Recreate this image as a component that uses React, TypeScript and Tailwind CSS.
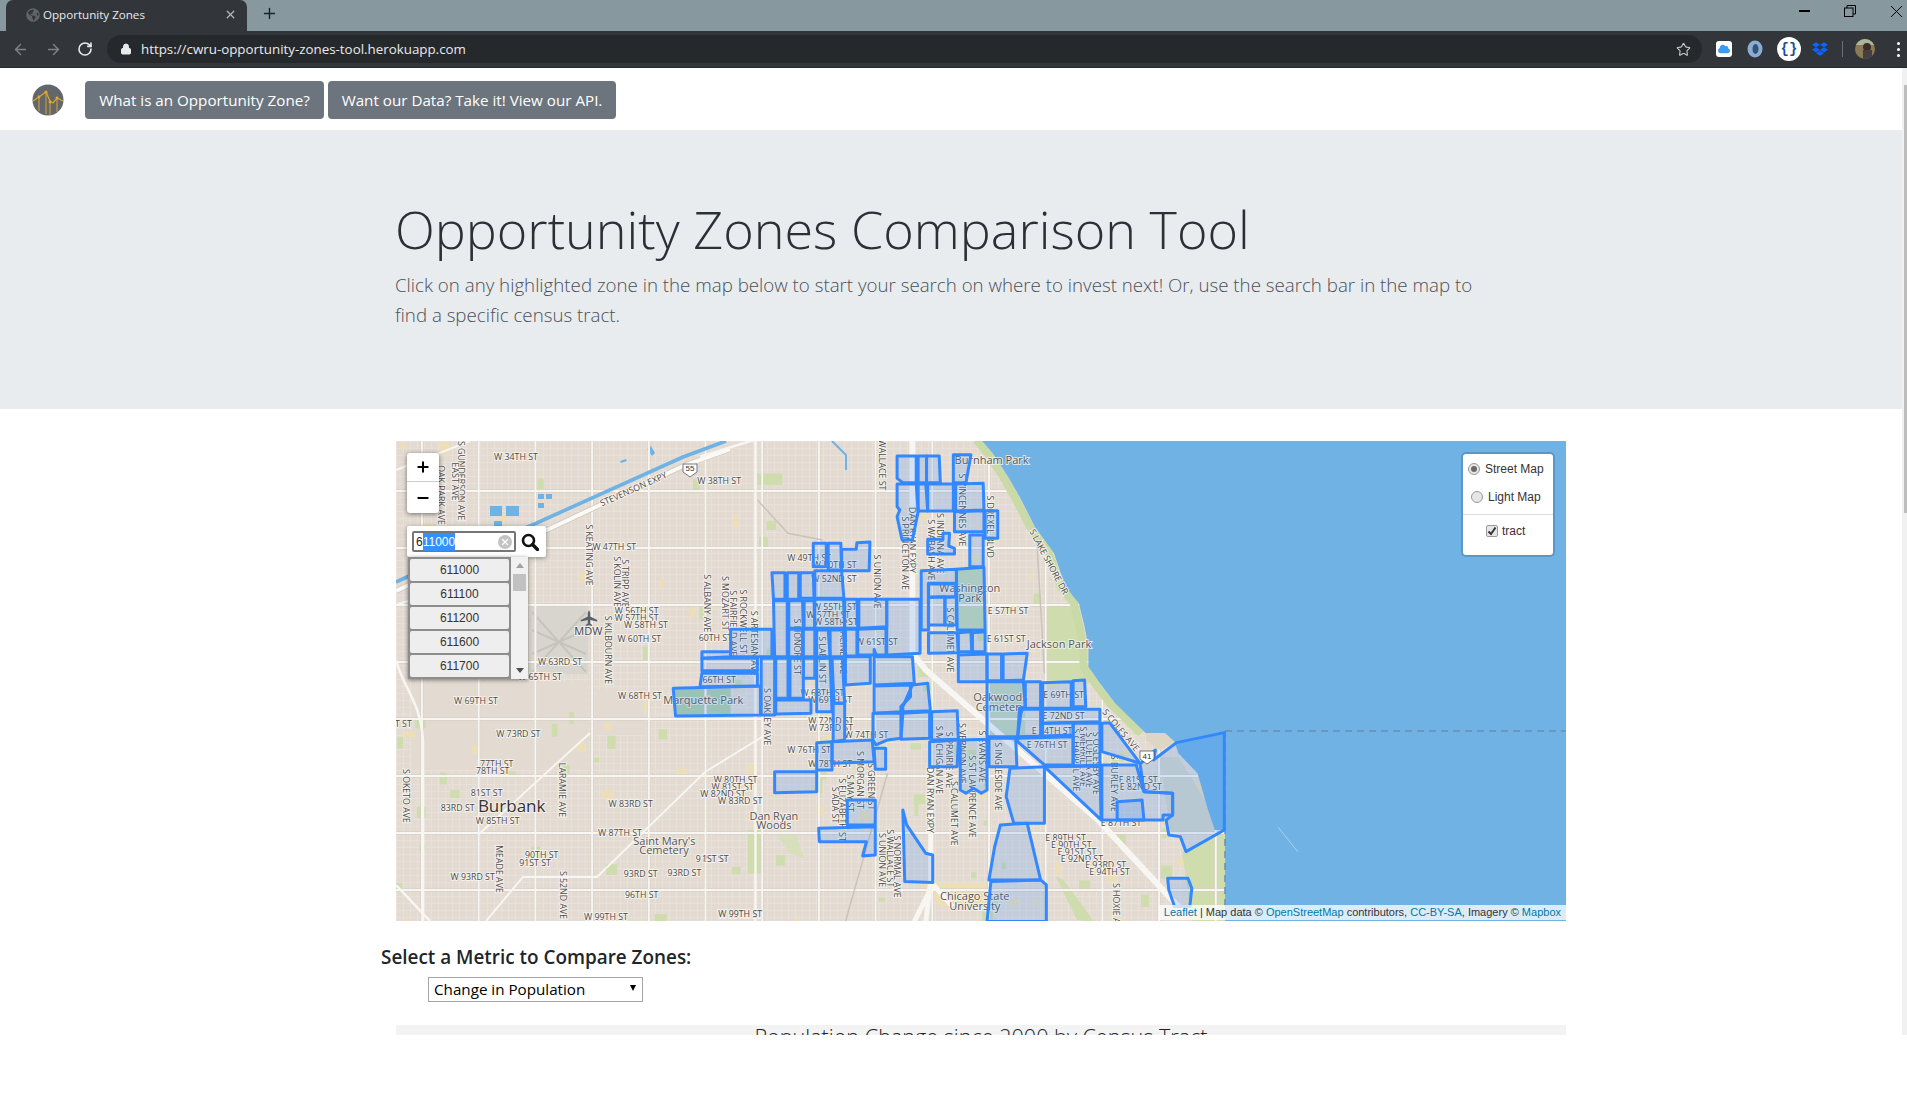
import React from "react";
import { ArrowLeft, ArrowRight, RotateCw, Lock, Star, X, Plus, Minus } from "lucide-react";
import { FaDropbox, FaGlobeAmericas, FaCloud } from "react-icons/fa";

// label tables: [text, x, y, kind] — coordinates read off the reference
type L = [string, number, number, number?, number?];
const z3 = (x: number, y: number): [number, number] => [390 + x / 3, 440 + y / 3];
const z7 = (x: number, y: number): [number, number] => [390 + x / 3, 690 + y / 3];
const z4 = (x: number, y: number): [number, number] => [700 + x / 2.613, 440 + y / 3];

const L3: L[] = [
  ["S GUNDERSON AVE", 215, 122, 90], ["EAST AVE", 197, 125, 90], ["OAK PARK AVE", 155, 165, 90], ["W 34TH ST", 378, 50],
  ["STEVENSON EXPY", 730, 147, -24], ["S KEATING AVE", 597, 345, 90], ["W 47TH ST", 673, 320], ["S KOLIN AVE", 683, 425, 90],
  ["S TRIPP AVE", 705, 430, 90], ["W 56TH ST", 740, 512], ["W 57TH ST", 740, 533], ["W 58TH ST", 768, 553], ["W 60TH ST", 748, 597],
  ["S KILBOURN AVE", 655, 630, 90], ["W 63RD ST", 510, 665], ["W 65TH ST", 450, 710], ["W 68TH ST", 750, 768],
];
const L7: L[] = [
  ["W 69TH ST", 258, 32], ["W 73RD ST", 385, 132], ["T ST", 40, 100], ["77TH ST", 320, 220], ["78TH ST", 308, 243], ["81ST ST", 290, 308],
  ["83RD ST", 203, 352], ["W 85TH ST", 323, 393], ["LARAMIE AVE", 518, 300, 90], ["S OKETO AVE", 50, 318, 90], ["W 83RD ST", 722, 340],
  ["W 87TH ST", 690, 427], ["MEADE AVE", 327, 537, 90], ["90TH ST", 455, 495], ["91ST ST", 435, 517], ["W 93RD ST", 248, 561],
  ["93RD ST", 752, 551], ["93RD ST", 883, 548], ["91ST ST", 965, 505], ["96TH ST", 755, 615], ["S 52ND AVE", 520, 615, 90],
  ["W 99TH ST", 648, 681], ["W 99TH ST", 1050, 673],
];
const L4: L[] = [
  ["WALLACE ST", 475, 75, 90], ["W 38TH ST", 50, 122], ["S DREXEL BLVD", 758, 260, 90], ["S LAKE SHORE DR", 912, 365, 62],
  ["E 57TH ST", 805, 512], ["E 61ST ST", 800, 597], ["W 49TH ST", 285, 353], ["W 50TH ST", 352, 373], ["W 52ND ST", 350, 415],
  ["S UNION AVE", 462, 425, 90], ["DAN RYAN EXPY", 555, 300, 90], ["S PRINCETON AVE", 537, 340, 90], ["S INDIANA AVE", 628, 310, 90],
  ["S WABASH AVE", 603, 330, 90], ["S CALUMET AVE", 655, 600, 90], ["S VINCENNES AVE", 685, 210, 90], ["S ALBANY AVE", 20, 490, 90],
  ["S MOZART ST", 65, 490, 90], ["S FAIRFIELD AVE", 88, 550, 90], ["S ROCKWELL ST", 112, 545, 90], ["S ARTESIAN AVE", 142, 610, 90],
  ["W 55TH ST", 352, 500], ["W 57TH ST", 335, 523], ["W 58TH ST", 355, 545], ["W 61ST ST", 462, 605], ["S HONORE ST", 255, 620, 90],
  ["S LAFLIN ST", 318, 660, 90], ["S RACINE AVE", 375, 620, 90], ["60TH ST", 40, 592], ["66TH ST", 50, 720], ["S OAKLEY AVE", 175, 830, 90],
  ["W 68TH ST", 320, 758], ["W 69TH ST", 340, 780], ["W 72ND ST", 342, 842], ["W 73RD ST", 342, 864], ["W 74TH ST", 435, 884],
  ["W 76TH ST", 285, 930], ["W 78TH ST", 340, 972], ["W 80TH ST", 93, 1018], ["W 81ST ST", 85, 1040], ["W 82ND ST", 60, 1062],
  ["W 83RD ST", 105, 1083], ["S MORGAN ST", 418, 1020, 90], ["S GREEN ST", 447, 1040, 90], ["S MAY ST", 392, 1060, 90],
  ["S ELIZABETH ST", 372, 1110, 90], ["S ADA ST", 354, 1095, 90], ["1ST ST", 40, 1255], ["S UNION AVE", 477, 1260, 90],
  ["S WALLACE ST", 497, 1255, 90], ["S NORMAL AVE", 515, 1280, 90], ["DAN RYAN EXPY", 602, 1080, 90], ["S MICHIGAN AVE", 625, 960, 90],
  ["S PRAIRIE AVE", 650, 960, 90], ["S VERNON AVE", 685, 940, 90], ["S CALUMET AVE", 665, 1120, 90], ["S ST LAWRENCE AVE", 712, 1070, 90],
  ["S EVANS AVE", 738, 950, 90], ["S INGLESIDE AVE", 778, 1010, 90], ["E 69TH ST", 950, 765], ["E 72ND ST", 950, 828], ["E 74TH ST", 920, 872],
  ["E 76TH ST", 907, 915], ["S CHAPPEL AVE", 982, 960, 90], ["S MERRILL AVE", 1000, 950, 90], ["S LUELLA AVE", 1018, 960, 90],
  ["S OGLESBY AVE", 1036, 970, 90], ["S COLES AVE", 1100, 870, 50], ["E 81ST ST", 1145, 1018], ["E 82ND ST", 1152, 1040],
  ["S BURLEY AVE", 1083, 1030, 90], ["E 89TH ST", 955, 1192], ["E 90TH ST", 970, 1213], ["E 91ST ST", 985, 1234], ["E 92ND ST", 998, 1255],
  ["E 93RD ST", 1060, 1275], ["E 94TH ST", 1070, 1296], ["W 99TH ST", 105, 1422], ["S HOXIE AVE", 1087, 1405, 90], ["E 87TH ST", 1100, 1148],
];
const PLACES: [string, [number, number], number, string][] = [
  ["Burbank", z7(365, 347), 17, "#333"], ["Saint Mary's", z7(823, 452), 11, "#555"], ["Cemetery", z7(822, 481), 11, "#555"],
  ["Marquette Park", z7(940, 31), 11, "#555"], ["Dan Ryan", z4(193, 1127), 11, "#555"], ["Woods", z4(193, 1155), 11, "#555"],
  ["Burnham Park", z4(762, 60), 11, "#555"], ["Jackson Park", z4(938, 612), 11, "#555"], ["Washington", z4(705, 445), 11, "#555"],
  ["Park", z4(705, 473), 11, "#555"], ["Oakwoods", z4(785, 770), 11, "#555"], ["Cemetery", z4(785, 800), 11, "#555"],
  ["Chicago State", z4(718, 1367), 11, "#555"], ["University", z4(718, 1397), 11, "#555"], ["MDW", z3(595, 572), 11, "#445"],
];

// tract outlines, in the 600x480 crop's coordinates
const TRACTS = [
  "515,48 565,48 565,128 530,128 515,115", "570,48 592,48 592,128 570,128", "592,48 625,48 628,128 592,128", "662,44 708,44 695,128 662,128",
  "515,132 565,132 570,215 555,300 528,300 515,230 522,210 515,200", "570,132 590,132 595,213 570,213", "595,132 662,132 662,213 595,213",
  "668,132 740,130 742,210 668,213", "665,215 742,212 742,275 665,275", "745,212 778,212 778,295 745,295", "705,285 740,285 740,380 705,380",
  "595,298 635,298 635,280 652,280 650,318 665,325 665,342 595,342",
  "296,310 330,310 330,380 296,380", "335,310 368,310 370,390 335,390", "370,328 408,328 410,308 444,306 442,392 370,392",
  "188,398 222,398 222,478 192,478", "228,398 258,398 258,478 228,478", "262,398 296,398 298,475 262,475", "300,392 370,392 376,475 300,475",
  "192,482 228,482 228,650 195,650", "232,482 268,482 270,565 232,565", "272,482 298,482 300,565 272,565", "232,568 268,568 268,650 232,650",
  "270,568 300,568 300,650 270,650", "300,478 375,478 378,565 300,565", "305,570 335,570 340,650 305,650", "340,570 375,570 378,650 340,650",
  "378,478 410,478 412,565 378,565", "415,478 488,478 488,560 415,565", "380,568 410,568 410,648 380,648", "412,568 486,565 486,645 412,645",
  "488,478 575,478 575,640 488,645", "578,392 670,388 670,430 597,430 597,570 578,570", "670,388 742,382 745,570 672,570", "597,432 668,432 668,470 597,472", "597,472 640,470 640,555 597,555",
  "640,472 670,470 670,555 640,555", "597,578 672,578 675,638 597,640", "675,578 708,575 710,635 675,635", "712,578 745,575 745,635 712,635",
  "675,645 750,642 750,725 675,725", "750,642 788,642 788,722 750,722", "792,642 855,640 845,720 792,722",
  "80,568 188,568 188,650 80,650", "5,635 80,635 80,650 5,655", "5,655 150,655 150,692 5,692", "5,700 150,700 150,738 0,740",
  "-70,745 158,738 158,825 -64,828", "160,655 195,655 195,825 160,825", "198,655 230,655 230,775 198,775", "235,655 270,655 270,775 235,775",
  "198,780 290,780 290,820 198,822", "270,655 300,655 300,715 270,715", "305,655 340,655 345,815 305,815", "345,655 372,655 378,790 350,790",
  "380,650 445,650 445,730 380,735", "455,628 462,650 555,650 560,730 455,735", "455,738 550,735 550,770 525,800 525,815 455,820", "348,790 378,790 378,900 348,905",
  "555,735 595,730 602,812 530,815 530,800", "452,820 525,820 525,895 490,900 460,915 452,900", "530,820 600,815 600,895 525,898", "605,815 672,812 675,898 605,900",
  "600,905 675,900 672,980 600,980", "680,900 750,898 750,1050 735,1060 715,1045 695,1060 680,1050", "755,895 825,895 828,980 755,980",
  "750,725 845,725 850,800 835,805 830,890 750,890", "850,725 890,725 890,805 850,805", "895,728 970,725 970,805 895,805", "975,722 1005,720 1008,800 975,800",
  "840,808 890,808 890,888 830,890", "895,808 1045,808 1045,845 895,850", "895,850 975,848 975,885 895,888", "830,895 975,890 975,975 900,975 830,905",
  "1050,850 1070,848 1150,970 1050,935", "975,850 1045,850 1045,975 975,978", "900,980 1045,978 1048,1140", "1050,975 1140,975 1160,1055 1235,1060 1235,1125 1210,1125 1210,1140 1050,1140",
  "1090,1085 1155,1080 1160,1140 1090,1140", "1150,972 1190,930 1185,960 1245,908 1370,878 1370,1170 1270,1235 1255,1190 1225,1185 1218,1140 1235,1125 1235,1060 1160,1055",
  "810,985 900,980 900,1150 820,1150 800,1070", "785,1155 855,1150 890,1320 755,1320 770,1220", "760,1325 890,1320 905,1335 905,1445 750,1445",
  "530,1110 540,1155 590,1240 608,1245 608,1328 535,1325", "1222,1315 1275,1315 1285,1345 1280,1400 1240,1400 1225,1350",
  "310,1165 458,1160 458,1245 425,1248 435,1205 312,1205", "385,1080 458,1080 458,1155 385,1155", "195,995 305,995 305,1055 195,1058",
  "305,908 345,905 345,990 305,990", "345,905 450,900 455,965 345,970", "455,925 485,925 485,988 458,988",
];

function blobs() {
  let s = 7;
  const r = () => (s = (s * 16807) % 2147483647) / 2147483647;
  const out: { x: number; y: number; w: number; h: number; c: string }[] = [];
  for (let i = 0; i < 130; i++) {
    const x = 396 + r() * 830, y = 441 + r() * 480;
    out.push({ x, y, w: 4 + r() * 8, h: 4 + r() * 10, c: r() > 0.45 ? "#cfdcae" : "#ecdfb8" });
  }
  return out;
}
const BLOBS = blobs();
const range = (a: number, b: number, d: number) => { const o: number[] = []; for (let v = a; v <= b; v += d) o.push(v); return o; };

function Label({ t, p, rot }: { t: string; p: [number, number]; rot?: number }) {
  return (
    <text x={p[0]} y={p[1]} dy="3.2" textAnchor="middle" fontSize="8.8" fill="#4a4a48" stroke="#f7f4ef" strokeWidth="2" strokeOpacity=".9"
      paintOrder="stroke" fontFamily="'Open Sans', sans-serif" transform={rot ? `rotate(${rot} ${p[0]} ${p[1]})` : undefined}>{t}</text>
  );
}

function MapDrawing() {
  const Z4 = "translate(700 440) scale(.3827 .3333)";
  const road = { fill: "none", stroke: "#f8f6f2", vectorEffect: "non-scaling-stroke" as const };
  return (
    <svg viewBox="396 441 1170 480" className="block w-full h-full">
      <defs>
        <pattern id="blocks" x="396" y="441" width="7" height="7" patternUnits="userSpaceOnUse">
          <path d="M0 .5H7M.5 0V7" stroke="#e9e3dc" strokeWidth=".7" fill="none" />
        </pattern>
      </defs>
      <rect x="396" y="441" width="1170" height="480" fill="#e3dbd2" />
      <rect x="396" y="441" width="1170" height="480" fill="url(#blocks)" />
      <rect x="412" y="682" width="176" height="88" fill="#e3dbd2" />
      <rect x="595" y="690" width="50" height="45" fill="#e3dbd2" />
      {BLOBS.map((b, i) => <rect key={i} x={b.x} y={b.y} width={b.w} height={b.h} fill={b.c} />)}

      {/* airport */}
      <rect x="530" y="606" width="58" height="68" fill="#d8d5cf" />
      <path d="M532 612L586 672M586 612L532 672M532 630L586 654M532 654L586 630" stroke="#c7c4be" strokeWidth="2" />

      {/* ponds and reservoirs */}
      <g fill="#6fb2e4">
        <rect x="490" y="506" width="12" height="10" /><rect x="506" y="506" width="13" height="10" />
        <rect x="538" y="494" width="6" height="5" /><rect x="546" y="494" width="6" height="5" /><rect x="538" y="503" width="6" height="5" />
        <rect x="494" y="521" width="8" height="5" />
        <path d="M620 461l6-2 1 2-6 2z" />
        <path d="M647 449l4-3 4 7-3 3z" />
      </g>

      {/* parks */}
      <g transform={Z4}>
        <polygon points="-70,745 80,740 80,825 -64,828" fill="#b3cfa8" />
        <polygon points="670,390 745,385 745,570 670,570" fill="#c6d8b4" />
        <polygon points="750,730 850,728 850,890 750,890" fill="#c4d6ba" />
        <polygon points="900,500 985,490 1005,600 1010,690 1040,730 900,720" fill="#cfdcae" />
        <polygon points="1200,950 1250,950 1330,1100 1345,1175 1230,1180" fill="#d6d6c8" />
        <polygon points="1260,1235 1372,1170 1372,1445 1285,1445" fill="#cfdcae" />
        <polygon points="125,1170 160,1170 160,1300 125,1300" fill="#cfdcae" />
        <polygon points="200,1180 250,1180 272,1255 232,1240" fill="#d8dfbd" />
        <polygon points="300,985 320,985 320,1060 300,1060" fill="#cfdcae" />
        <polygon points="930,1310 985,1440 1030,1445 950,1320" fill="#cfdcae" />
        <polygon points="600,1330 760,1330 745,1400 620,1400" fill="#ecdfb8" />
        <polygon points="150,100 215,100 215,135 150,135" fill="#cfdcae" />
      </g>

      {/* arterial grid */}
      <g stroke="#d4ccc1" strokeWidth="2.8" fill="none">
        {range(422, 1240, 56.7).map((x) => <line key={x} x1={x} x2={x} y1="441" y2="921" />)}
        {range(434, 920, 57).map((y) => <line key={y} x1="396" x2="1240" y1={y} y2={y} />)}
      </g>
      <g stroke="#f8f6f2" strokeWidth="1.9" fill="none">
        {range(422, 1240, 56.7).map((x) => <line key={x} x1={x} x2={x} y1="441" y2="921" />)}
        {range(434, 920, 57).map((y) => <line key={y} x1="396" x2="1240" y1={y} y2={y} />)}
        <path d="M478 835L590 733M486 921L523 877H597L705 772L762 737" />
        <path d="M396 605L440 590M396 470L470 441" />
      </g>

      {/* canal, expressways */}
      <path d="M396 591L435 573L530 538L683 466L730 449" stroke="#cfc7bc" strokeWidth="5.5" fill="none" />
      <path d="M396 591L435 573L530 538L683 466L730 449" stroke="#fbfaf7" strokeWidth="4" fill="none" />
      <path d="M396 582L435 564L530 526L683 457L726 441" stroke="#6fb2e4" strokeWidth="3.6" fill="none" />
      <g transform={Z4}>
        <path d="M555 0V640L590 690L1040 1140L1250 1400" {...road} strokeWidth="6" />
        <path d="M603 980V1320L590 1445M610 1330L560 1445M610 1335L660 1400" {...road} strokeWidth="5" />
        <path d="M145 0V1445M0 50L140 0" {...road} strokeWidth="2.4" />
        <path d="M490 1000L380 1445" fill="none" stroke="#cbc3b9" strokeWidth="1.5" vectorEffect="non-scaling-stroke" />
        <path d="M150 180L230 280 320 300M880 300L900 700" fill="none" stroke="#cbc3b9" strokeWidth="1.5" vectorEffect="non-scaling-stroke" />
      </g>
      <path d="M396 660 C404 690 420 700 423 740V921M396 885L430 921" {...road} strokeWidth="2.5" />
      <path d="M702 441L716 455V470" fill="none" stroke="#6fb2e4" strokeWidth="2" transform="translate(130 0)" />

      {/* lake */}
      <g transform={Z4}>
        <polyline points="730,0 760,40 800,110 830,170 870,260 920,340 950,440 985,490 1000,560 1010,620 1010,680 1040,730 1080,790 1160,880" fill="none" stroke="#c9daa6" strokeWidth="8" vectorEffect="non-scaling-stroke" transform="translate(-8 0)" />
        <polygon points="735,0 765,40 805,110 835,170 875,260 925,340 955,440 990,490 1005,560 1015,620 1015,680 1045,730 1085,790 1165,880 1215,880 1240,905 1250,940 1300,1000 1325,1100 1345,1170 1372,1170 1372,1445 2300,1445 2300,0" fill="#71b2e4" />
        <polygon points="1165,880 1215,880 1240,905 1200,930 1165,900" fill="#ddd6c4" />
      </g>
      <path d="M1225 731H1566" stroke="#6b8ea9" strokeWidth="1.5" strokeDasharray="7 5" fill="none" />
      <path d="M1225 731V921" stroke="#6b8ea9" strokeWidth="1.5" strokeDasharray="7 5" fill="none" />
      <path d="M1278 827L1298 852" stroke="#a9d0ee" strokeWidth="1" />

      {/* labels */}
      {L3.map(([t, x, y, r], i) => <Label key={"a" + i} t={t} p={z3(x, y)} rot={r} />)}
      {L7.map(([t, x, y, r], i) => <Label key={"b" + i} t={t} p={z7(x, y)} rot={r} />)}
      {L4.map(([t, x, y, r], i) => <Label key={"c" + i} t={t} p={z4(x, y)} rot={r} />)}
      {PLACES.map(([t, p, s, c], i) => (
        <text key={"p" + i} x={p[0]} y={p[1]} dy={s * 0.36} textAnchor="middle" fontSize={s} fill={c} stroke="#f7f4ef" strokeWidth="2" strokeOpacity=".8" paintOrder="stroke" fontFamily="'Open Sans', sans-serif">{t}</text>
      ))}
      <path d="M589 610l1.2 3v3.5l7 3.5v1.6l-7-1.6v3.5l2 1.5v1l-3.2-.7-3.2.7v-1l2-1.5v-3.5l-7 1.6v-1.6l7-3.5v-3.5z" fill="#5b6068" />

      {/* tracts */}
      <g transform={Z4}>
        {TRACTS.map((p, i) => (
          <polygon key={i} points={p} fill="#3388ff" fillOpacity=".18" stroke="#3388ff" strokeWidth="3" strokeLinejoin="round" vectorEffect="non-scaling-stroke" />
        ))}
      </g>
      <g fill="#fff" stroke="#555" strokeWidth=".8">
        <path d="M683 464h14v8l-7 5-7-5z" />
      </g>
      <text x="690" y="471" textAnchor="middle" fontSize="8" fill="#333" fontFamily="'Liberation Sans', sans-serif">55</text>
      <g fill="#fff" stroke="#555" strokeWidth=".8">
        <path d="M1140 751h14v8l-7 5-7-5z" />
      </g>
      <text x="1147" y="759" textAnchor="middle" fontSize="8" fill="#333" fontFamily="'Liberation Sans', sans-serif">41</text>
    </svg>
  );
}

function Logo() {
  return (
    <svg width="32" height="32" viewBox="0 0 32 32">
      <circle cx="16" cy="16" r="15.5" fill="#63676c" />
      <path d="M1 17l6-4 7-5 4 9 3 2 4-5 6 3" fill="none" stroke="#d9a32a" strokeWidth="1.3" />
      <path d="M7 27V13M14 30V8M18 31V17M25 28V14" fill="none" stroke="#d9a32a" strokeWidth="1" />
      <circle cx="14" cy="8" r="1.6" fill="#e3ac2b" /><circle cx="7" cy="13" r="1.4" fill="#e3ac2b" /><circle cx="25" cy="14" r="1.4" fill="#e3ac2b" /><circle cx="18" cy="18" r="1.4" fill="#e3ac2b" />
    </svg>
  );
}

function ChromeBar() {
  return (
    <header className="font-['Open_Sans',sans-serif]">
      <div className="h-[31px] bg-[#87999f] flex items-end relative">
        <div className="ml-[6px] w-[241px] h-[31px] bg-[#32363a] rounded-t-[7px] flex items-center pl-[20px] pr-[10px] pb-[2px] text-[#e8eaed] text-[11.6px]">
          <FaGlobeAmericas className="w-[14px] h-[14px] text-[#5f6469] shrink-0" />
          <span className="ml-[3px] flex-1">Opportunity Zones</span>
          <X className="w-[13px] h-[13px] text-[#b4b7ba]" strokeWidth={2.4} />
        </div>
        <Plus className="ml-[14px] mb-[9px] w-[17px] h-[17px] text-[#202326]" strokeWidth={2} />
        <div className="ml-auto flex items-center h-[31px] gap-[34px] pr-[4px] pb-[9px]">
          <div className="w-[11px] h-[1.5px] bg-black" />
          <svg width="12" height="12" viewBox="0 0 12 12" fill="none" stroke="#000" strokeWidth="1"><rect x=".5" y="3" width="8.5" height="8.5" /><path d="M3 3V.5h8.5V9H9" /></svg>
          <svg width="13" height="13" viewBox="0 0 13 13" stroke="#000" strokeWidth="1"><path d="M1 1L12 12M12 1L1 12" /></svg>
        </div>
      </div>
      <div className="h-[37px] bg-[#32363a] flex items-center border-b border-[#26292c]">
        <ArrowLeft className="ml-[12px] w-[17px] h-[17px] text-[#7f8387]" strokeWidth={2} />
        <ArrowRight className="ml-[16px] w-[17px] h-[17px] text-[#7f8387]" strokeWidth={2} />
        <RotateCw className="ml-[15px] w-[16px] h-[16px] text-[#e8eaed]" strokeWidth={2.4} />
        <div className="ml-[14px] w-[1595px] h-[28px] rounded-full bg-[#26292c] flex items-center pl-[13px] pr-[10px]">
          <Lock className="w-[12px] h-[12px] text-[#e8eaed]" fill="#e8eaed" strokeWidth={2} />
          <span className="ml-[9px] text-[13.35px] text-[#e8eaed] flex-1 pt-[1px]">https://cwru-opportunity-zones-tool.herokuapp.com</span>
          <Star className="w-[15px] h-[15px] text-[#c5c8cb] mr-[1px]" strokeWidth={1.8} />
        </div>
        <div className="w-[16px] h-[16px] rounded-[3px] bg-white ml-[14px] flex items-center justify-center"><FaCloud className="w-[12px] h-[12px] text-[#3b9bf0]" /></div>
        <svg className="ml-[15px]" width="16" height="18" viewBox="0 0 16 18"><ellipse cx="8" cy="9" rx="7.5" ry="8.5" fill="#8aaed2" /><ellipse cx="8.5" cy="9" rx="3" ry="5" fill="#33537a" /></svg>
        <div className="ml-[14px] w-[24px] h-[24px] rounded-full bg-white flex items-center justify-center text-[#1c4e9c] text-[14px] font-bold font-['Liberation_Mono',monospace]">{"{}"}</div>
        <FaDropbox className="ml-[11px] w-[16px] h-[16px] text-[#0d63ff]" />
        <div className="ml-[14px] w-px h-[16px] bg-[#6a6e72]" />
        <svg className="ml-[12px]" width="20" height="20" viewBox="0 0 20 20"><clipPath id="av"><circle cx="10" cy="10" r="10" /></clipPath><g clipPath="url(#av)"><rect width="20" height="20" fill="#8b7a55" /><rect width="20" height="6" fill="#a9b79a" /><circle cx="12" cy="8" r="4" fill="#3b2d25" /><rect x="8" y="11" width="9" height="10" fill="#44403f" /></g></svg>
        <div className="ml-[22px] flex flex-col gap-[3px]">
          <div className="w-[3px] h-[3px] bg-white rounded-full" /><div className="w-[3px] h-[3px] bg-white rounded-full" /><div className="w-[3px] h-[3px] bg-white rounded-full" />
        </div>
      </div>
    </header>
  );
}

function MapControls() {
  return (
    <>
      <div className="absolute left-[11px] top-[12px] w-[32px] h-[60px] bg-white rounded-[3px] shadow-[0_1px_5px_rgba(0,0,0,0.5)] flex flex-col">
        <div className="h-[29px] flex items-center justify-center border-b border-[#ccc]"><Plus className="w-[16px] h-[16px] text-black" strokeWidth={3} /></div>
        <div className="flex-1 flex items-center justify-center"><Minus className="w-[16px] h-[16px] text-black" strokeWidth={3} /></div>
      </div>

      <div className="absolute left-[11px] top-[85px] w-[139px] h-[31px] bg-white rounded-[2px] shadow-[0_1px_5px_rgba(0,0,0,0.4)] flex items-center pl-[5px]">
        <div className="w-[104px] h-[21px] border-2 border-[#767676] rounded-[2px] flex items-center pl-[2px] font-['Liberation_Sans',sans-serif] text-[12px] text-[#222]">
          <span>6</span><span className="bg-[#3390ff] text-white">11000</span>
          <span className="ml-auto mr-[2px] w-[14px] h-[14px] rounded-full bg-[#c4c4c4] flex items-center justify-center"><X className="w-[10px] h-[10px] text-white" strokeWidth={3} /></span>
        </div>
        <svg className="ml-[5px]" width="18" height="18" viewBox="0 0 18 18" fill="none" stroke="#111" strokeWidth="2.6"><circle cx="7.5" cy="7.5" r="5.5" /><path d="M11.5 11.5L16.5 16.5" strokeWidth="3.4" strokeLinecap="round" /></svg>
      </div>

      <div className="absolute left-[12px] top-[116px] w-[120px] h-[122px] flex bg-[#8d8d8d] shadow-[0_1px_4px_rgba(0,0,0,0.5)] font-['Liberation_Sans',sans-serif]">
        <div className="w-[103px] pt-[2px] pl-[2px] flex flex-col gap-[2px]">
          {["611000", "611100", "611200", "611600", "611700"].map((t) => (
            <div key={t} className="h-[22px] w-[99px] rounded-[2px] bg-[#eeeeee] flex items-center justify-center text-[12px] text-[#333]">{t}</div>
          ))}
        </div>
        <div className="w-[17px] bg-[#f1f1f1] flex flex-col items-center justify-between py-[6px] relative">
          <div className="w-0 h-0 border-x-[4px] border-x-transparent border-b-[5px] border-b-[#a3a3a3]" />
          <div className="absolute top-[17px] left-[2px] w-[13px] h-[17px] bg-[#c1c1c1]" />
          <div className="w-0 h-0 border-x-[4px] border-x-transparent border-t-[5px] border-t-[#505050]" />
        </div>
      </div>

      <div className="absolute right-[11px] top-[11px] w-[94px] h-[105px] bg-white rounded-[5px] border-2 border-[#5a97c6] font-['Liberation_Sans',sans-serif] text-[12px] text-[#333]">
        <div className="flex items-center h-[27px] pl-[5px] pt-[2px]">
          <span className="w-[12px] h-[12px] rounded-full border border-[#9a9a9a] bg-[#e6e6e6] flex items-center justify-center"><span className="w-[6px] h-[6px] rounded-full bg-[#6a6a6a]" /></span>
          <span className="ml-[5px]">Street Map</span>
        </div>
        <div className="flex items-center h-[29px] pl-[8px] pt-[2px]">
          <span className="w-[12px] h-[12px] rounded-full border border-[#9a9a9a] bg-[#e6e6e6]" />
          <span className="ml-[5px]">Light Map</span>
        </div>
        <div className="mt-[4px] border-t border-[#ddd] flex items-center pl-[23px] pt-[7px]">
          <span className="w-[12px] h-[12px] rounded-[2px] border border-[#9a9a9a] bg-[#e6e6e6] flex items-center justify-center">
            <svg width="10" height="10" viewBox="0 0 10 10" fill="none" stroke="#333" strokeWidth="2"><path d="M1.5 5.5L4 8L8.5 1.5" /></svg>
          </span>
          <span className="ml-[4px]">tract</span>
        </div>
      </div>

      <div className="absolute right-0 bottom-[1px] h-[15px] bg-white/75 pl-[5px] pr-[5px] flex items-center font-['Liberation_Sans',sans-serif] text-[11px] text-[#333] whitespace-pre">
        <span className="text-[#0078a8]">Leaflet</span><span> | Map data © </span><span className="text-[#0078a8]">OpenStreetMap</span><span> contributors, </span>
        <span className="text-[#0078a8]">CC-BY-SA</span><span>, Imagery © </span><span className="text-[#0078a8]">Mapbox</span>
      </div>
    </>
  );
}

export default function App() {
  return (
    <div className="w-[1907px] h-[1102px] overflow-hidden bg-white">
      <ChromeBar />
      <div className="h-[967px] flex overflow-hidden">
        <main className="flex-1 overflow-hidden font-['Open_Sans',sans-serif] text-[#212529]">
          <nav className="h-[62px] flex items-center pl-[32px] pt-[2px]">
            <Logo />
            <button className="ml-[21px] h-[38px] w-[239px] rounded-[4px] bg-[#6c757d] text-white text-[15.2px]">What is an Opportunity Zone?</button>
            <button className="ml-[4px] h-[38px] w-[288px] rounded-[4px] bg-[#6c757d] text-white text-[15.2px]">Want our Data? Take it! View our API.</button>
          </nav>
          <section className="h-[279px] bg-[#e9ecef] pl-[395px] pt-[66px]">
            <h1 className="text-[52.1px] leading-[66px] font-light text-[#2b3035]">Opportunity Zones Comparison Tool</h1>
            <p className="mt-[8px] w-[1090px] text-[18.72px] leading-[30px] font-light text-[#495057]">Click on any highlighted zone in the map below to start your search on where to invest next! Or, use the search bar in the map to find a specific census tract.</p>
          </section>
          <div className="mt-[32px] ml-[396px] w-[1170px] h-[480px] relative overflow-hidden">
            <MapDrawing />
            <MapControls />
          </div>
          <h5 className="ml-[381px] mt-[21px] text-[18.9px] leading-[30px] font-semibold">Select a Metric to Compare Zones:</h5>
          <div className="ml-[428px] mt-[5px] w-[215px] h-[25px] border border-[#a5a5a5] bg-white flex items-center justify-between pl-[5px] pr-[6px] text-[15.2px] text-black">
            <span>Change in Population</span>
            <span className="mb-[4px] w-0 h-0 border-x-[3px] border-x-transparent border-t-[6px] border-t-black" />
          </div>
          <div className="mt-[23px] ml-[396px] w-[1170px] h-[40px] bg-[#f3f3f3] text-center text-[21.6px] font-light leading-[24px]">Population Change since 2000 by Census Tract</div>
        </main>
        <div className="w-[5px] bg-[#f1f1f1] pl-[2px] pt-[17px]">
          <div className="h-[428px] bg-[#bdbdbd]" />
        </div>
      </div>
    </div>
  );
}
